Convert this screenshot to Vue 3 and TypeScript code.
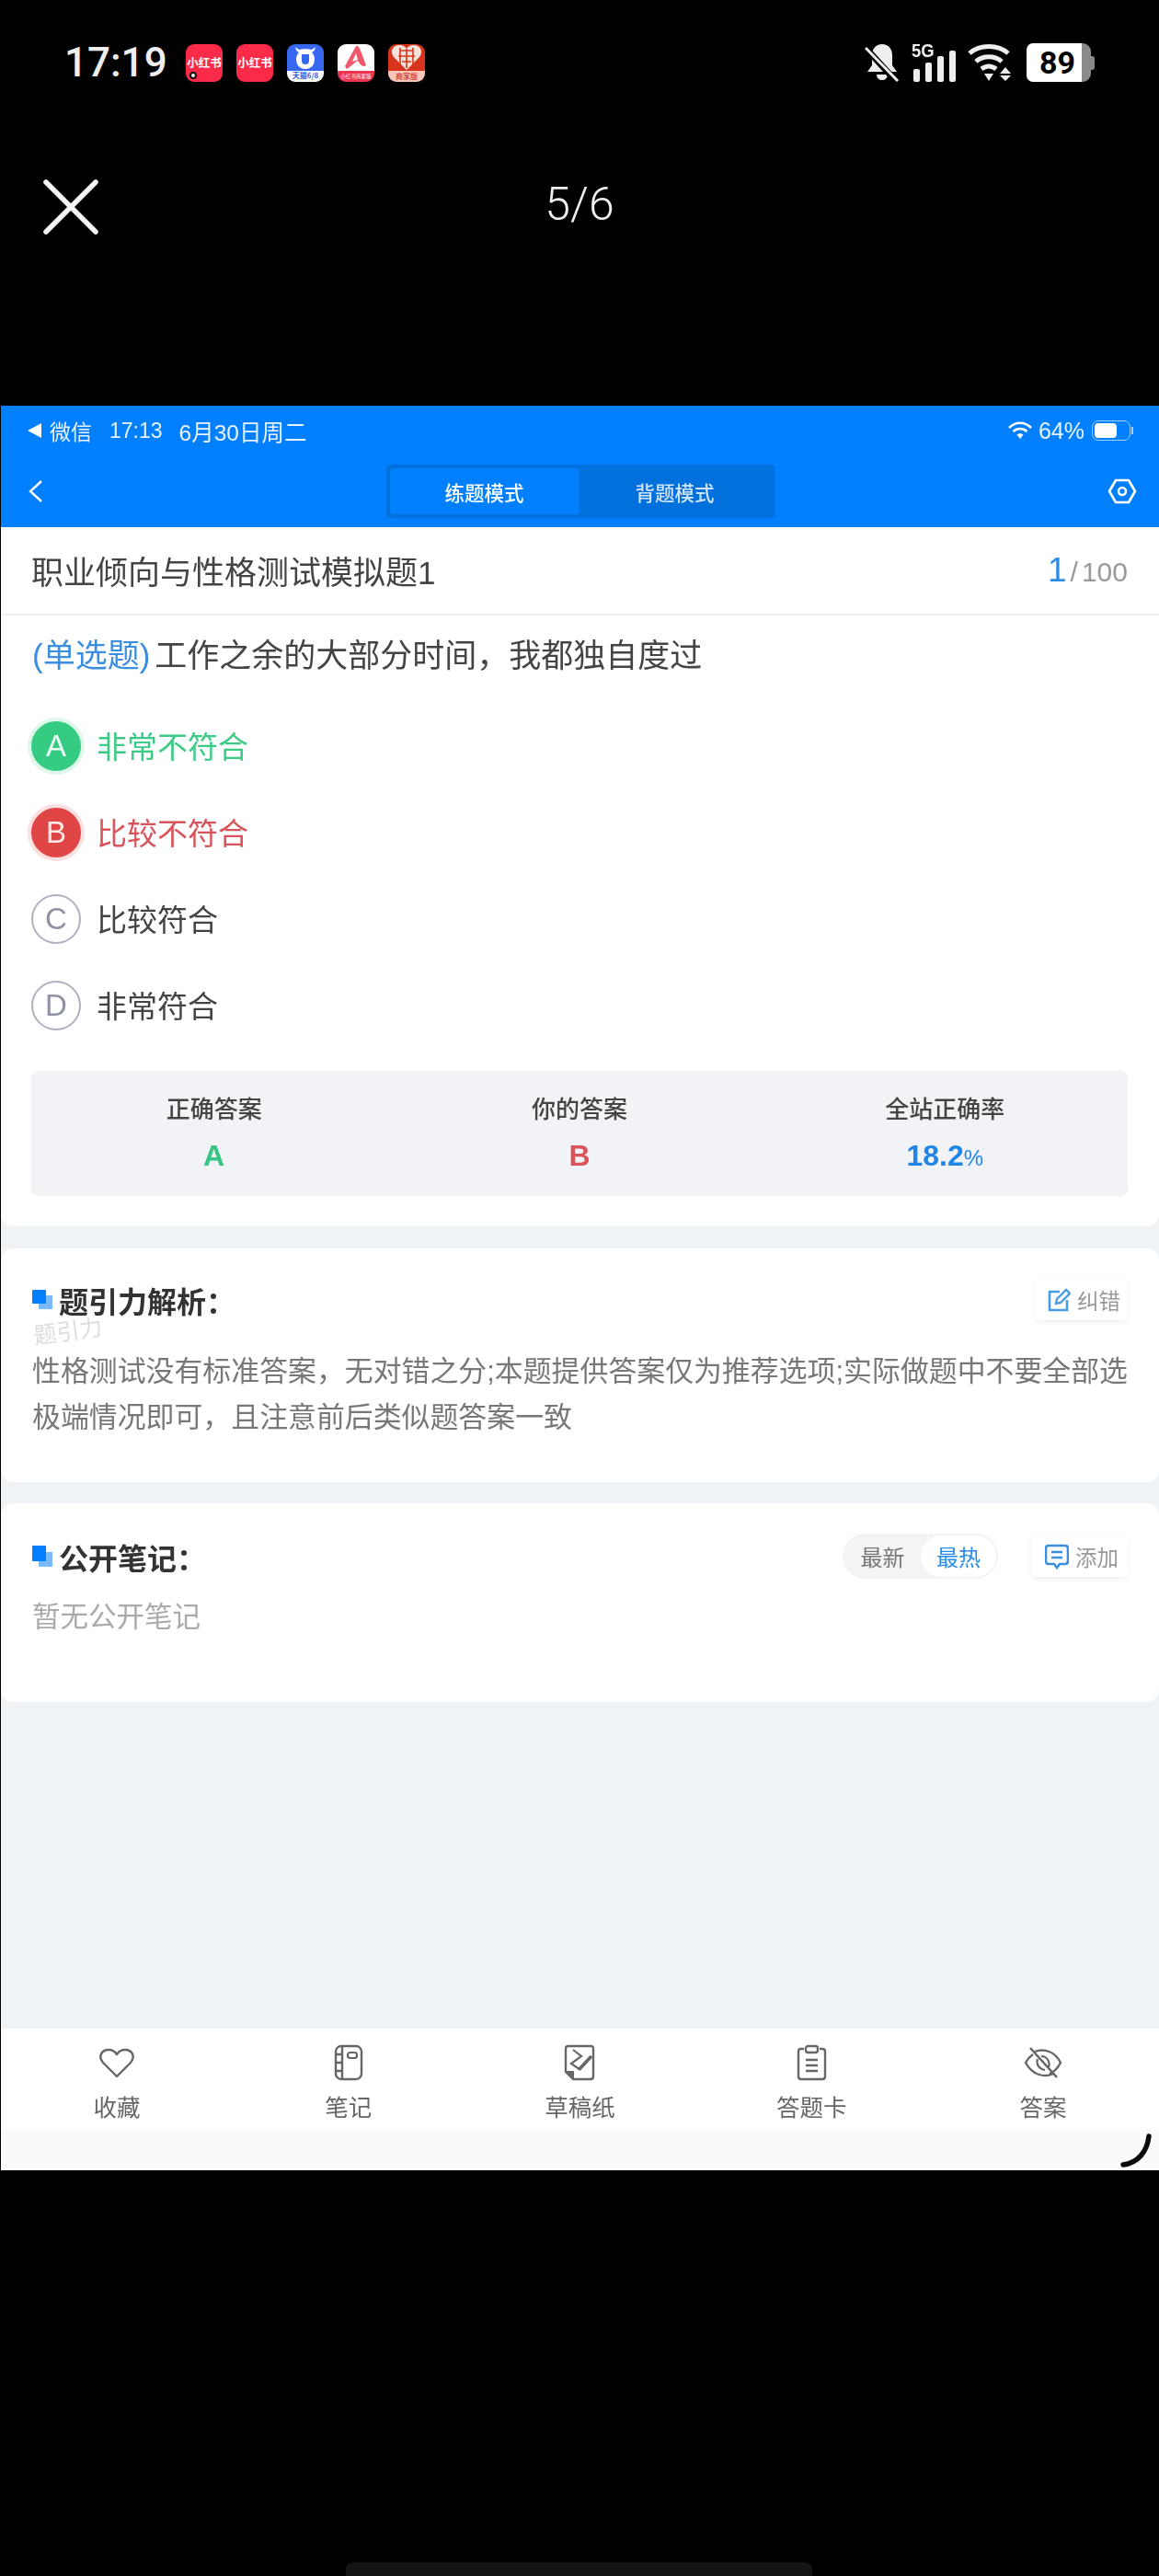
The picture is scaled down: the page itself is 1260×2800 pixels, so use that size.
<script setup lang="ts">
interface Option { key: string; text: string; state: string }
const options: Option[] = [
  { key: 'A', text: '非常不符合', state: 'right' },
  { key: 'B', text: '比较不符合', state: 'wrong' },
  { key: 'C', text: '比较符合', state: '' },
  { key: 'D', text: '非常符合', state: '' },
]
const tabs = ['收藏', '笔记', '草稿纸', '答题卡', '答案']
</script>

<template>
  <div class="phone">
    <div class="sys">
      <div class="sys-left">
        <span class="clock">17:19</span>
        <div class="apps">
          <div class="app red"><span class="rb">小红书</span><i class="dot"></i></div>
          <div class="app red"><span class="rb">小红书</span></div>
          <div class="app cat">
            <svg width="40" height="28" viewBox="0 0 40 28"><path d="M9 3 C10 7 11 8 13 9 C11 11 10 13 10 16 C10 23 14 27 20 27 C26 27 30 23 30 16 C30 13 29 11 27 9 C29 8 30 7 31 3 L27 6 C23 5 17 5 13 6 Z M16 11 H24 V18 C24 21 22 22 20 22 C18 22 16 21 16 18 Z" fill="#fff" fill-rule="evenodd"/></svg>
            <span class="cat-b">天猫6/8</span>
          </div>
          <div class="app aa">
            <svg width="40" height="29" viewBox="0 0 40 29"><path d="M20 2 C23 2 24 4 25 7 L31 23 C27 26 24 21 22 18 C18 20 15 24 10 27 L8 24 Z" fill="#ee5a6c"/><path d="M20 10 L16 19 L22 17 Z" fill="#fff"/></svg>
            <span class="aa-b">小红书商家版</span>
          </div>
          <div class="app pdd">
            <svg width="34" height="29" viewBox="0 0 34 29"><path d="M17 28 L3 14 C-2 7 3 1 9 1 C13 1 16 3 17 5 C18 3 21 1 25 1 C31 1 36 7 31 14 Z" fill="#f6e2da"/><path d="M10 7 H24 M8 13 H26 M12 19 H22 M17 5 V26 M10 4 V22 M24 4 V22" stroke="#d8341c" stroke-width="1.6" fill="none"/></svg>
            <span class="pdd-b">商家版</span>
          </div>
        </div>
      </div>
      <div class="sys-right">
        <svg width="38" height="42" viewBox="0 0 38 42"><path d="M19 1 C26 1 30 6 30 13 V24 L35 31 H3 L8 24 V13 C8 6 12 1 19 1 Z M13 34 H25 C25 38 22 40 19 40 C16 40 13 38 13 34 Z" fill="#eee"/><path d="M1 5 L33 40" stroke="#000" stroke-width="7"/><path d="M1 5 L36 41" stroke="#eee" stroke-width="3"/></svg>
        <div class="sig">
          <span class="five">5G</span>
          <div class="bars"><i style="height: 14px"></i><i style="height: 21px"></i><i style="height: 28px"></i><i style="height: 34px"></i></div>
        </div>
        <svg width="52" height="42" viewBox="0 0 52 42"><g fill="none" stroke="#eee" stroke-width="5"><path d="M2 11 C13 1 33 1 44 11"/><path d="M9 20 C16 13 30 13 37 20"/><path d="M15 28 C20 24 26 24 31 28"/></g><path d="M18 33 H28 L23 41 Z M41 26 L47 33 H35 Z M35 35 H47 L41 41 Z" fill="#eee"/></svg>
        <div class="bat"><span>89</span></div>
      </div>
    </div>

    <div class="viewer">
      <svg class="close" width="60" height="60" viewBox="0 0 60 60"><path d="M3 3 L57 57 M57 3 L3 57" stroke="#f4f4f4" stroke-width="5.500" stroke-linecap="round"/></svg>
      <span class="count">5/6</span>
      <span></span>
    </div>

    <div class="shot">
      <header class="blue">
        <div class="ios">
          <div class="ios-l">
            <svg width="15" height="16" viewBox="0 0 15 16"><path d="M15 0 V16 L0 8 Z" fill="#fff"/></svg>
            <span>微信</span>
            <span class="t1">17:13</span>
            <span class="t2">6月30日周二</span>
          </div>
          <div class="ios-r">
            <svg width="26" height="20" viewBox="0 0 26 20"><g fill="none" stroke="#fff" stroke-width="2.6"><path d="M1 7 C8 0 18 0 25 7"/><path d="M5.500 11 C10 7 16 7 20.500 11"/></g><path d="M9.500 14.500 C12 12.500 14 12.500 16.500 14.500 L13 19 Z" fill="#fff"/></svg>
            <span>64%</span>
            <div class="ibat"><i></i></div>
            <b class="inub"></b>
          </div>
        </div>
        <nav class="nav">
          <svg class="back" width="16" height="26" viewBox="0 0 16 26"><path d="M14 2 L2 13 L14 24" fill="none" stroke="#fff" stroke-width="2.4"/></svg>
          <div class="mode">
            <span class="mode-on">练题模式</span>
            <span class="mode-off">背题模式</span>
          </div>
          <svg class="gear" width="32" height="28" viewBox="0 0 32 28"><path d="M9 2 H23 L30 14 L23 26 H9 L2 14 Z" fill="none" stroke="#fff" stroke-width="2.6" stroke-linejoin="round"/><circle cx="16" cy="14" r="4" fill="none" stroke="#fff" stroke-width="2.6"/></svg>
        </nav>
      </header>

      <section class="sheet">
        <div class="title-row">
          <span class="paper">职业倾向与性格测试模拟题1</span>
          <span class="prog"><b>1</b><em>/</em>100</span>
        </div>
        <p class="question"><span class="qtype">(单选题)</span>工作之余的大部分时间&#65292;我都独自度过</p>
        <div class="opts">
          <div v-for="o in options" :key="o.key" class="opt" :class="o.state">
            <span class="mark">{{ o.key }}</span>
            <span class="otext">{{ o.text }}</span>
          </div>
        </div>
        <div class="stats">
          <div class="stat"><span class="lab">正确答案</span><b class="val g">A</b></div>
          <div class="stat"><span class="lab">你的答案</span><b class="val r">B</b></div>
          <div class="stat"><span class="lab">全站正确率</span><b class="val b">18.2<small>%</small></b></div>
        </div>
      </section>

      <section class="card c2">
        <div class="head">
          <div class="h-title">
            <svg width="22" height="21" viewBox="0 0 22 21"><rect x="7" y="6" width="15" height="15" fill="#7abafa"/><rect width="15" height="15" rx="1" fill="#0080fe"/></svg>
            <span>题引力解析&#65306;</span>
          </div>
          <div class="mini">
            <svg width="26" height="26" viewBox="0 0 26 26"><path d="M14 4 H3 V24 H22 V13" fill="none" stroke="#4a9be6" stroke-width="2.600"/><path d="M10 17 L11 12 L21 2 L25 6 L15 16 Z" fill="none" stroke="#4a9be6" stroke-width="2.400"/></svg>
            <span>纠错</span>
          </div>
        </div>
        <span class="mark-water">题引力</span>
        <p class="body">性格测试没有标准答案&#65292;无对错之分;本题提供答案仅为推荐选项;实际做题中不要全部选<span class="l2">极端情况即可&#65292;且注意前后类似题答案一致</span></p>
      </section>

      <section class="card c3">
        <div class="head">
          <div class="h-title">
            <svg width="22" height="23" viewBox="0 0 22 23"><rect x="7" y="7" width="15" height="16" fill="#7abafa"/><rect width="15" height="17" rx="1" fill="#0080fe"/></svg>
            <span>公开笔记&#65306;</span>
          </div>
          <div class="tools">
            <div class="sort"><span class="s-off">最新</span><span class="s-on">最热</span></div>
            <div class="mini add">
              <svg width="26" height="28" viewBox="0 0 26 28"><path d="M4 2 H22 Q25 2 25 5 V19 Q25 22 22 22 H16 L13 26 L10 22 H4 Q1 22 1 19 V5 Q1 2 4 2 Z" fill="none" stroke="#3a8fe0" stroke-width="2.600"/><path d="M7 9 H19 M7 15 H19" stroke="#3a8fe0" stroke-width="2.400"/></svg>
              <span>添加</span>
            </div>
          </div>
        </div>
        <p class="empty">暂无公开笔记</p>
      </section>

      <div class="spacer"></div>

      <footer class="tabs">
        <div v-for="(t, i) in tabs" :key="t" class="tab">
          <div class="ico">
            <svg v-if="i === 0" width="38" height="33" viewBox="0 0 38 33"><path d="M19 31 L4 16 C-2 9 3 2 10 2 C14 2 17 4 19 7 C21 4 24 2 28 2 C35 2 40 9 34 16 Z" fill="none" stroke="#666" stroke-width="2.400" stroke-linejoin="round"/></svg>
            <svg v-else-if="i === 1" width="32" height="40" viewBox="0 0 32 40"><rect x="2" y="2" width="28" height="36" rx="6" fill="none" stroke="#666" stroke-width="2.400"/><path d="M9 2 V38 M2 11 H9 M2 20 H9 M2 29 H9" fill="none" stroke="#666" stroke-width="2.400"/><rect x="15" y="9" width="10" height="6" rx="2.500" fill="none" stroke="#666" stroke-width="2.200"/></svg>
            <svg v-else-if="i === 2" width="34" height="40" viewBox="0 0 34 40"><path d="M10 38 H29 Q32 38 32 35 V5 Q32 2 29 2 H5 Q2 2 2 5 V30 Z" fill="none" stroke="#666" stroke-width="2.400" stroke-linejoin="round"/><path d="M2 30 H10 V38" fill="#666" stroke="#666" stroke-width="2"/><path d="M10 6 L19 13 L8 21 L18 28" fill="none" stroke="#666" stroke-width="2.200"/><path d="M17 27 L30 13" stroke="#666" stroke-width="3.600"/></svg>
            <svg v-else-if="i === 3" width="33" height="40" viewBox="0 0 33 40"><path d="M8 5 H5 Q2 5 2 8 V35 Q2 38 5 38 H28 Q31 38 31 35 V8 Q31 5 28 5 H25" fill="none" stroke="#666" stroke-width="2.400"/><rect x="10" y="2" width="13" height="7" rx="2.500" fill="none" stroke="#666" stroke-width="2.400"/><path d="M10 17 H23 M10 23 H23 M10 29 H23" stroke="#666" stroke-width="2.400"/></svg>
            <svg v-else width="42" height="36" viewBox="0 0 42 36"><path d="M12 6 C22 2 34 6 40 18 C37 24 33 28 28 30 M32 30 C22 35 9 31 2 18 C4 14 7 11 10 9" fill="none" stroke="#666" stroke-width="2.400"/><path d="M15 14 C13 20 17 25 23 26 M27 23 C29 17 25 11 19 11" fill="none" stroke="#666" stroke-width="2.200"/><path d="M7 2 L36 34" stroke="#666" stroke-width="2.600"/></svg>
          </div>
          <span>{{ t }}</span>
        </div>
      </footer>
      <div class="foot">
        <svg class="arc" width="36" height="38" viewBox="0 0 36 38"><path d="M32 3 C30 20 20 32 4 34" fill="none" stroke="#0a0a0a" stroke-width="5.500" stroke-linecap="round"/></svg>
      </div>
    </div>
    <div class="home"></div>
  </div>
</template>

<style>
html, body { margin: 0; background: #000; }
</style>

<style scoped>
.phone {
  width: 1260px;
  height: 2800px;
  background: #000;
  display: flex;
  flex-direction: column;
  position: relative;
  font-family: "Liberation Sans", "Noto Sans CJK SC", sans-serif;
}
.sys {
  height: 136px;
  display: flex;
  justify-content: space-between;
  align-items: center;
  padding: 0 74px 0 70px;
  flex: none;
}
.sys-left, .sys-right { display: flex; align-items: center; }
.clock { font: 500 44px/1 Roboto, sans-serif; color: #eee; width: 132px; }
.apps { display: flex; gap: 15px; }
.app {
  width: 40px;
  height: 41px;
  border-radius: 9px;
  overflow: hidden;
  position: relative;
  display: flex;
  flex-direction: column;
  align-items: center;
}
.red { background: #fb2a48; justify-content: center; }
.rb { color: #fff; font: 700 12.500px/1 "Noto Sans CJK SC", sans-serif; white-space: nowrap; }
.dot { position: absolute; left: 4px; bottom: 3px; width: 8px; height: 8px; border-radius: 50%; background: #fff; border: 2px solid #111; box-sizing: border-box; }
.cat { background: linear-gradient(#3766f0 70%, #fff 70%); }
.cat-b { color: #2f5fe0; font: 700 8px/12px "Noto Sans CJK SC", sans-serif; white-space: nowrap; }
.aa { background: linear-gradient(#fff 70%, #e9354f 70%); }
.aa-b { color: #fdd; font: 500 5.500px/12px "Noto Sans CJK SC", sans-serif; white-space: nowrap; }
.pdd { background: linear-gradient(#d8341c 70%, #f9c7ba 70%); }
.pdd-b { color: #c33; font: 500 8px/12px "Noto Sans CJK SC", sans-serif; white-space: nowrap; }
.sys-right { gap: 11px; }
.sig { width: 50px; height: 42px; position: relative; margin-left: 2px; }
.five { position: absolute; left: 0; top: -3px; font: 700 21px/22px "Liberation Sans", sans-serif; color: #eee; transform: scaleX(.88); transform-origin: left; }
.bars { position: absolute; left: 2px; bottom: 0; display: flex; align-items: flex-end; gap: 6px; }
.bars i { display: block; width: 7px; background: #eee; border-radius: 2px; }
.bat {
  width: 70px;
  height: 42px;
  border-radius: 7px 9px 9px 7px;
  background: linear-gradient(90deg, #fff 86%, #8a8a8a 86%);
  position: relative;
  color: #000;
  margin-left: 1px;
}
.bat::after { content: ""; position: absolute; right: -4px; top: 14px; width: 4px; height: 15px; background: #8a8a8a; border-radius: 0 3px 3px 0; }
.bat span { position: absolute; left: 14px; top: 0; font: 700 34px/42px Roboto, sans-serif; }

.viewer {
  height: 178px;
  flex: none;
  display: grid;
  grid-template-columns: 1fr auto 1fr;
  align-items: center;
  padding: 0 47px;
  margin-bottom: 127px;
}
.close { display: block; }
.count { font: 300 50px/1 Roboto, sans-serif; color: #f0f0f0; position: relative; top: -3px; }

.shot {
  height: 1918px;
  flex: none;
  margin-left: 1px;
  background: #f0f3f6;
  display: flex;
  flex-direction: column;
  filter: blur(.4px);
}
.blue { height: 132px; background: #0080fe; color: #fff; flex: none; }
.ios { height: 54px; display: flex; justify-content: space-between; align-items: center; padding: 0 28px 0 29px; font-size: 23px; color: #e8f3ff; }
.ios-l, .ios-r { display: flex; align-items: center; }
.ios-l span:first-of-type { margin-left: 9px; }
.t1 { margin-left: 19px; }
.t2 { margin-left: 18px; font-size: 24.500px; }
.ios-r span { margin-left: 7px; font-size: 25px; }
.ibat { width: 42px; height: 22px; border: 1.500px solid #9fd0ff; border-radius: 7px; box-sizing: border-box; padding: 2px; margin-left: 8px; }
.ibat i { display: block; width: 24px; height: 100%; background: #fff; border-radius: 4px; }
.inub { display: block; width: 2px; height: 8px; background: #9fd0ff; margin-left: 1px; }
.nav { height: 78px; display: grid; grid-template-columns: 1fr auto 1fr; align-items: center; padding: 0 27px; }
.back { display: block; margin-left: 3px; }
.gear { justify-self: end; display: block; margin-right: -3px; }
.mode { display: flex; width: 422px; height: 58px; padding: 4px; box-sizing: border-box; background: #0070dc; border-radius: 4px; font-size: 21.500px; font-weight: 500; }
.mode span { display: flex; align-items: center; justify-content: center; height: 100%; }
.mode-on { width: 206px; background: #0080fe; border-radius: 4px; color: #fff; }
.mode-off { flex: 1; color: #cfe4fb; }

.sheet { background: #fff; border-radius: 0 0 14px 14px; flex: none; height: 760px; box-sizing: border-box; }
.title-row { height: 96px; border-bottom: 2px solid #eee; box-sizing: border-box; display: flex; align-items: center; justify-content: space-between; padding: 0 34px 0 33px; color: #444; }
.paper { font-size: 35px; padding-bottom: 2px; }
.prog { color: #999; font-size: 30px; }
.prog b { color: #2a8ce6; font-size: 37px; font-weight: 400; }
.prog em { font-style: normal; margin: 0 4px; }
.question { margin: 19px 0 0; padding: 0 34px; font-size: 35px; line-height: 50px; color: #444; white-space: nowrap; }
.qtype { color: #3b8ee0; margin-right: 5px; }
.opts { margin-top: 26px; padding: 0 33px; }
.opt { height: 94px; display: flex; align-items: center; gap: 17px; font-size: 33px; color: #444; }
.otext { padding-bottom: 3px; }
.mark { width: 54px; height: 54px; box-sizing: border-box; border-radius: 50%; border: 2px solid #aeb1bf; color: #8f93a3; font-size: 33px; display: flex; align-items: center; justify-content: center; }
.opt.right { color: #3ccb85; }
.opt.right .mark { background: #35cc82; border-color: #35cc82; color: #e9fff3; box-shadow: 0 0 0 4px #dff6ea; }
.opt.wrong { color: #d9535a; }
.opt.wrong .mark { background: #e04545; border-color: #e04545; color: #ffeaea; box-shadow: 0 0 0 4px #fae0e0; }
.stats { margin: 24px 34px 0 33px; height: 136px; background: #f1f3f6; border-radius: 8px; display: grid; grid-template-columns: repeat(3, 1fr); }
.stat { display: flex; flex-direction: column; align-items: center; }
.lab { font-size: 26px; font-weight: 500; line-height: 36px; color: #444; margin-top: 24px; }
.val { font-size: 32px; line-height: 40px; margin-top: 12px; font-weight: 700; }
.val small { font-size: 24px; font-weight: 400; }
.g { color: #36c584; }
.r { color: #d9535a; }
.b { color: #1f86e8; }

.card { background: #fff; border-radius: 14px; flex: none; padding: 33px 34px 0; box-sizing: border-box; position: relative; }
.c2 { height: 254px; margin-top: 24px; }
.c3 { height: 216px; margin-top: 23px; }
.head { display: flex; justify-content: space-between; align-items: center; }
.c2 .head { height: 45px; }
.c3 .head { height: 49px; }
.h-title { display: flex; align-items: center; gap: 7px; font-size: 32px; font-weight: 700; color: #333; }
.mini { display: flex; align-items: center; gap: 7px; height: 45px; padding: 0 8px 0 13px; border-radius: 6px; box-shadow: 0 2px 6px rgba(0,0,0,.07); font-size: 23.500px; color: #999; }
.add { padding: 0 10px 0 15px; }
.mark-water { position: absolute; left: 35px; top: 70px; font-size: 25px; color: #ddd; transform: rotate(-8deg); }
.body { margin: 31px -4px 0 0; font-size: 30.900px; line-height: 50px; color: #777; }
.l2 { display: block; }
.tools { display: flex; align-items: center; gap: 36px; }
.sort { width: 169px; height: 49px; padding: 2px; box-sizing: border-box; border-radius: 25px; background: #f4f4f4; display: flex; font-size: 24px; }
.s-off { width: 83px; display: flex; align-items: center; justify-content: center; color: #777; }
.s-on { flex: 1; display: flex; align-items: center; justify-content: center; background: #fff; border-radius: 23px; color: #2a8ce6; }
.empty { margin: 16px 0 0; font-size: 30.500px; line-height: 50px; color: #aaa; }

.spacer { flex: 1; }
.tabs { height: 110px; background: #fff; flex: none; display: grid; grid-template-columns: repeat(5, 1fr); }
.tab { display: flex; flex-direction: column; align-items: center; padding-top: 17px; font-size: 25.500px; color: #666; }
.ico { height: 40px; display: flex; align-items: center; justify-content: center; }
.tab span { line-height: 36px; margin-top: 11px; }
.foot { height: 44px; background: #fafafa; flex: none; position: relative; }
.arc { position: absolute; right: 7px; top: 4px; display: block; }
.home { position: absolute; left: 376px; top: 2785px; width: 507px; height: 15px; border-radius: 8px 8px 0 0; background: #141414; }
</style>
